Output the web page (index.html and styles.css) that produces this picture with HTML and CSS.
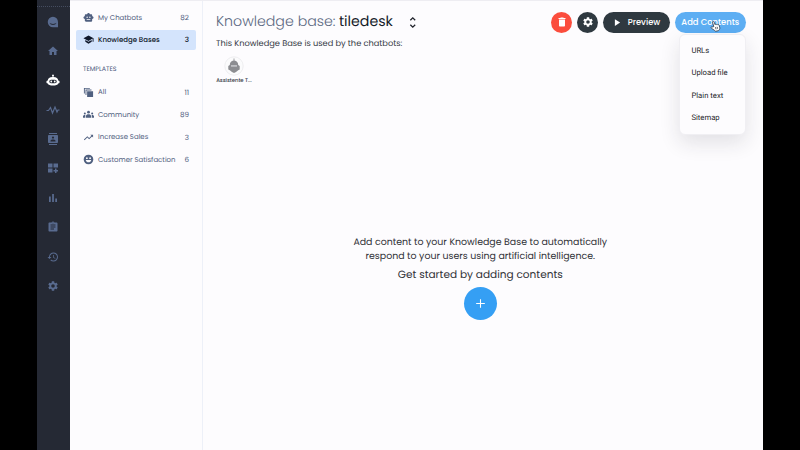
FILE: index.html
```html
<!DOCTYPE html>
<html lang="en">
<head>
<meta charset="utf-8">
<title>Knowledge Bases</title>
<link rel="stylesheet" href="styles.css">
</head>
<body>
<div class="app">
  <nav class="rail">
    <svg viewBox="0 0 24 24"><path fill-rule="evenodd" d="M12 1.500A10.500 10.500 0 1 0 12 22.500H22V12A10.500 10.500 0 0 0 12 1.500zM5 13.500c3 3 11 3 14 0c-2 6-12 6-14 0z"/></svg>
    <svg viewBox="0 0 24 24"><path d="M10 20v-6h4v6h5v-8h3L12 3 2 12h3v8z"/></svg>
    <svg class="bot" viewBox="0 0 28 24"><path fill-rule="evenodd" d="M14 1a2 2 0 0 0-1 3.700V6C7 6 4 9 3.500 13L1 14v4l2.500 1c1 3 5 4 10.500 4s9.500-1 10.500-4l2.500-1v-4l-2.500-1C24 9 21 6 15 6V4.700A2 2 0 0 0 14 1zM10 11.500h8a3.500 3.500 0 0 1 0 7h-8a3.500 3.500 0 0 1 0-7z"/><circle cx="10.500" cy="15" r="1.800"/><circle cx="17.500" cy="15" r="1.800"/></svg>
    <svg class="pulse" viewBox="0 0 28 24"><path d="M1 13h4l4-6 4 11 5-12 4 10 2-4h3"/></svg>
    <svg viewBox="0 0 24 24"><path d="M20 0H4v2h16V0zM4 24h16v-2H4v2zM20 4H4c-1.100 0-2 .9-2 2v12c0 1.100.9 2 2 2h16c1.100 0 2-.9 2-2V6c0-1.100-.9-2-2-2zm-8 2.750a2.250 2.250 0 1 1 0 4.500 2.250 2.250 0 0 1 0-4.500zM17 17H7v-1.500c0-1.670 3.330-2.500 5-2.500s5 .83 5 2.500V17z"/></svg>
    <svg viewBox="0 0 24 24"><path d="M2 3h9v8H2zM13 3h9v8h-9zM2 13h9v8H2zM16 13h3v3h3v3h-3v3h-3v-3h-3v-3h3z"/></svg>
    <svg viewBox="0 0 24 24"><path d="M4 9h3.500v11H4zM10.300 4h3.500v16h-3.500zM16.500 13H20v7h-3.500z"/></svg>
    <svg viewBox="0 0 24 24"><path d="M19 3h-4.180C14.400 1.840 13.300 1 12 1s-2.400.84-2.820 2H5c-1.100 0-2 .9-2 2v14c0 1.100.9 2 2 2h14c1.100 0 2-.9 2-2V5c0-1.100-.9-2-2-2zm-7 0c.55 0 1 .45 1 1s-.45 1-1 1-1-.45-1-1 .45-1 1-1zm2 14H7v-2h7v2zm3-4H7v-2h10v2zm0-4H7V7h10v2z"/></svg>
    <svg viewBox="0 0 24 24"><path d="M13 3a9 9 0 0 0-9 9H1l3.890 3.890.07.14L9 12H6c0-3.870 3.130-7 7-7s7 3.130 7 7-3.130 7-7 7c-1.930 0-3.680-.79-4.940-2.060l-1.420 1.420A8.954 8.954 0 0 0 13 21a9 9 0 0 0 0-18zm-1 5v5l4.280 2.540.72-1.210-3.500-2.080V8H12z"/></svg>
    <svg viewBox="0 0 24 24"><path id="gear" d="M19.140 12.940c.04-.3.06-.61.06-.94 0-.32-.02-.64-.07-.94l2.030-1.580c.18-.14.23-.41.12-.61l-1.920-3.320c-.12-.22-.37-.29-.59-.22l-2.390.96c-.5-.38-1.030-.7-1.620-.94l-.36-2.540c-.04-.24-.24-.41-.48-.41h-3.840c-.24 0-.43.17-.47.41l-.36 2.540c-.59.24-1.130.57-1.620.94l-2.390-.96c-.22-.08-.47 0-.59.22L2.740 8.870c-.12.21-.08.47.12.61l2.030 1.580c-.05.3-.09.63-.09.94s.02.64.07.94l-2.030 1.580c-.18.14-.23.41-.12.61l1.920 3.320c.12.22.37.29.59.22l2.390-.96c.5.38 1.030.7 1.620.94l.36 2.540c.05.24.24.41.48.41h3.840c.24 0 .44-.17.47-.41l.36-2.540c.59-.24 1.130-.56 1.620-.94l2.390.96c.22.08.47 0 .59-.22l1.920-3.320c.12-.22.07-.47-.12-.61l-2.010-1.580zM12 15.600A3.600 3.600 0 1 1 12 8.400a3.600 3.600 0 0 1 0 7.200z"/></svg>
  </nav>

  <aside class="menu">
    <a class="item"><svg viewBox="0 0 24 24"><path fill-rule="evenodd" d="M20 9V7c0-1.100-.9-2-2-2h-3c0-1.660-1.340-3-3-3S9 3.340 9 5H6c-1.100 0-2 .9-2 2v2c-1.660 0-3 1.340-3 3s1.340 3 3 3v4c0 1.100.9 2 2 2h12c1.100 0 2-.9 2-2v-4c1.660 0 3-1.340 3-3s-1.340-3-3-3zM7.500 11.500a1.500 1.500 0 1 1 3 0 1.500 1.500 0 0 1-3 0zM16 17H8v-2h8v2zm-1-4a1.500 1.500 0 1 1 0-3 1.500 1.500 0 0 1 0 3z"/></svg><span>My Chatbots</span><b>82</b></a>
    <a class="item active"><svg viewBox="0 0 24 24"><path d="M5 13.180v4L12 21l7-3.820v-4L12 17l-7-3.820zM12 3L1 9l11 6 9-4.910V17h2V9L12 3z"/></svg><span>Knowledge Bases</span><b>3</b></a>
    <h2>TEMPLATES</h2>
    <a class="item"><svg viewBox="0 0 24 24"><path d="M9 9h13v13H9zM2 2h13v2H4v10H2zM5.500 5.500h13v2h-11v10h-2z"/></svg><span>All</span><b>11</b></a>
    <a class="item"><svg viewBox="0 0 24 24"><circle cx="12" cy="7" r="3"/><circle cx="4" cy="10" r="2.200"/><circle cx="20" cy="10" r="2.200"/><path d="M6.500 19v-4c0-5 11-5 11 0v4zM0 19v-3c0-2 2-3.500 5-3v6zM24 19v-3c0-2-2-3.500-5-3v6z"/></svg><span>Community</span><b>89</b></a>
    <a class="item"><svg viewBox="0 0 24 24"><path d="M16 6l2.290 2.290-4.880 4.880-4-4L2 16.590 3.410 18l6-6 4 4 6.300-6.290L22 12V6z"/></svg><span>Increase Sales</span><b>3</b></a>
    <a class="item"><svg viewBox="0 0 24 24"><path fill-rule="evenodd" d="M12 1.500a10.500 10.500 0 1 0 0 21 10.500 10.500 0 0 0 0-21zM8.500 7a2 2 0 1 1 0 4 2 2 0 0 1 0-4zm7 0a2 2 0 1 1 0 4 2 2 0 0 1 0-4zM6 13h12c-1 7-11 7-12 0z"/></svg><span>Customer Satisfaction</span><b>6</b></a>
  </aside>

  <main>
    <header>
      <h1><span class="light">Knowledge base:</span><span class="name">tiledesk</span></h1>
      <svg class="unfold" viewBox="0 0 24 24"><path d="M8 8l4.500-4.500L17 8M8 16l4.500 4.500L17 16"/></svg>
      <div class="actions">
        <button class="round red"><svg viewBox="0 0 24 24"><path d="M6 19c0 1.100.9 2 2 2h8c1.100 0 2-.9 2-2V7H6v12zM19 4h-3.500l-1-1h-5l-1 1H5v2h14V4z"/></svg></button>
        <button class="round"><svg viewBox="0 0 24 24"><use href="#gear"/></svg></button>
        <button class="preview"><svg viewBox="0 0 24 24"><path d="M5 3v18l14-9z"/></svg><span>Preview</span></button>
        <div class="add-wrap">
          <button class="add"><span>Add Contents</span></button>
          <svg class="hand" viewBox="0 0 20 22"><path d="M7 12L4.500 4.500C4 2.500 6.500 1.500 7.300 3.500L9.200 8.500c.5-1.300 2-1.300 2.600 0 .7-1 2-.8 2.500.3 1-.8 2.200-.2 2.500 1.200l1 4c.5 2-.8 4.500-2.500 5.500l-5 1.200c-2.300-1.700-4-3.500-7.500-5.200-2-1.200-.8-3.300 1-2.600zM10 13l1 4M13 12.500l.8 3.500"/></svg>
          <ul class="dropdown"><li>URLs</li><li>Upload file</li><li>Plain text</li><li>Sitemap</li></ul>
        </div>
      </div>
    </header>
    <p class="used">This Knowledge Base is used by the chatbots:</p>
    <div class="chatbot">
      <svg viewBox="0 0 20 20"><circle class="ring" cx="10" cy="10" r="9.200"/><path d="M9.600 2.500h.8v2c2.400.3 3.800 2 3.800 4.500l1.500 1v3.500l-1.500.8L12 16l-2 1-2-1-2.200-1.700-1.500-.8V10l1.500-1c0-2.500 1.400-4.200 3.800-4.500z"/><path class="visor" d="M7 9h6v1.800H7z"/></svg>
      <span>Assistente T...</span>
    </div>
    <section class="empty">
      <p class="line">Add content to your Knowledge Base to automatically</p>
      <p class="line">respond to your users using artificial intelligence.</p>
      <p class="start">Get started by adding contents</p>
      <button class="plus"><svg viewBox="0 0 24 24"><path d="M12 4v16M4 12h16"/></svg></button>
    </section>
  </main>
</div>
</body>
</html>
```
FILE: styles.css
```css
* { box-sizing: border-box; }
body { margin: 0; background: #000; font-family: Poppins, Inter, "Liberation Sans", sans-serif; overflow: hidden; text-rendering: geometricPrecision; }
h1, h2, p, ul { margin: 0; padding: 0; font-weight: 400; }
span, p, h1, h2 { white-space: nowrap; }
svg { display: block; flex: none; fill: currentColor; }
button { border: 0; padding: 0; color: #fff; font-family: inherit; display: flex; align-items: center; justify-content: center; }
.app { display: flex; width: 726.600px; height: 450px; margin-left: 36.600px; background: #fdfcfe; border-top: 1px solid #eeedf2; }

.rail { width: 33.400px; margin-top: -1px; padding-right: 1.400px; background: #252934; color: #596b8f; display: flex; flex-direction: column; align-items: center; gap: 17.400px; padding-top: 15.500px; background-image: linear-gradient(90deg, #454d60 50%, transparent 50%); background-size: 2px 1px; background-repeat: repeat-x; background-position: 0 6px; }
.rail svg { width: 12px; height: 12px; }
.rail .bot { width: 14px; color: #fff; }
.rail .pulse { width: 14px; fill: none; stroke: currentColor; stroke-width: 2.400; }

.menu { width: 133px; padding: 7px 6px 0; border-right: 1px solid #edf0f8; color: #506080; }
.item { display: flex; align-items: center; height: 20px; margin-bottom: 2.400px; padding: 0 7px; font-size: 6.970px; border-radius: 2px; }
.item svg { width: 11px; height: 11px; margin: -1px 4px 0 0; }
.item span { padding-top: 1.400px; }
.item b { margin-left: auto; font-weight: 400; font-size: 7.200px; }
.item.active { background: #d4e4fc; color: #10182b; }
.active span, .active b { font-weight: 500; }
.menu h2 { height: 30px; line-height: 34px; padding-left: 7px; font-size: 6.400px; }

main { flex: 1; padding: 10px 17.600px 0 13px; display: flex; flex-direction: column; }
header { display: flex; height: 22px; align-items: center; }
h1 { font-size: 14.200px; line-height: 20px; margin-top: -2px; display: flex; gap: 4px; color: #151b29; }
.light { color: #5b6881; font-weight: 300; }
.name { margin-left: -.6px; }
.unfold { width: 13px; height: 13px; margin-left: 13px; fill: none; stroke: #20232b; stroke-width: 2.400; }
.actions { margin-left: auto; display: flex; gap: 5px; }
.round, .preview, .add { height: 21px; border-radius: 11px; background: #2f3940; font-size: 8.400px; font-weight: 500; }
.round { width: 21px; }
.red { background: #fb4d3d; }
.round svg { width: 12px; height: 12px; }
.preview { width: 67px; gap: 6px; }
.preview svg { width: 9px; height: 9px; }
.add-wrap { position: relative; }
.add { width: 70.600px; background: #5daef3; }
.hand { position: absolute; left: 35px; top: 8px; width: 11px; height: 12px; fill: #fff; stroke: #28333e; stroke-width: 1.400; }
.dropdown { position: absolute; left: 4px; top: 22.500px; width: 67px; height: 101px; padding: 4.500px 0 0 11.400px; list-style: none; background: #fdfcfe; border: 1px solid #f0eff3; border-radius: 6px; box-shadow: 0 8px 20px rgba(30, 30, 50, .12); font-family: Roboto, sans-serif; font-size: 7.700px; color: #26262b; }
.dropdown li { height: 22.600px; line-height: 22.600px; }

.used { margin-top: 3px; line-height: 14px; font-size: 8.260px; color: #343944; }
.chatbot { width: 36px; margin-top: 6px; font-size: 5.300px; color: #333843; display: flex; flex-direction: column; align-items: center; }
.chatbot svg { width: 20px; height: 20px; color: #8c8d91; }
.chatbot span { line-height: 8px; font-weight: 500; }
.ring { fill: #fbfbfc; stroke: #e4e4e8; stroke-width: .6; }
.visor { fill: #bfc0c4; }

.empty { margin-top: 152px; padding-right: 1px; display: flex; flex-direction: column; align-items: center; color: #303136; }
.line { font-size: 9.430px; line-height: 14px; }
.start { font-size: 10.550px; line-height: 20px; margin-top: 1px; }
.plus { width: 33px; height: 33px; margin-top: 2px; border-radius: 50%; background: #359ff4; }
.plus svg { width: 13px; height: 13px; fill: none; stroke: #fff; stroke-width: 2; }
```
